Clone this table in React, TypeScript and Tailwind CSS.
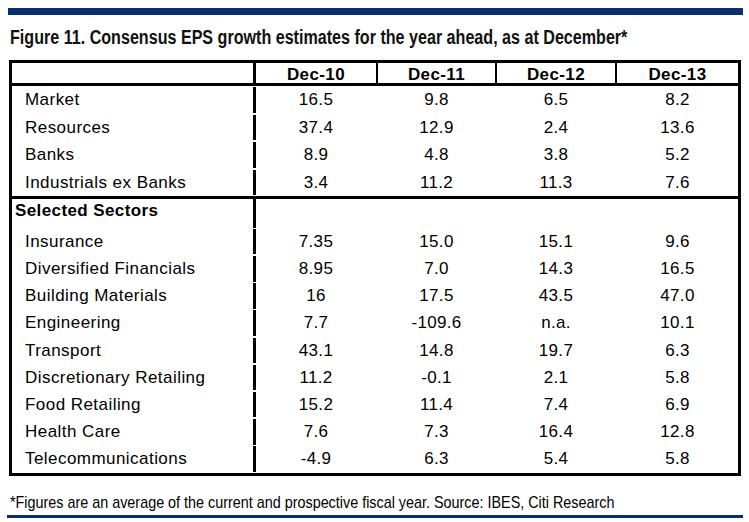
import type { ReactNode } from 'react';

// ─── Data ─────────────────────────────────────────────────────────────────────
type Row = [string, string, string, string, string];

const HEADERS = ['Dec-10', 'Dec-11', 'Dec-12', 'Dec-13'];

const MARKET_ROWS: Row[] = [
  ['Market', '16.5', '9.8', '6.5', '8.2'],
  ['Resources', '37.4', '12.9', '2.4', '13.6'],
  ['Banks', '8.9', '4.8', '3.8', '5.2'],
  ['Industrials ex Banks', '3.4', '11.2', '11.3', '7.6'],
];

const SECTOR_ROWS: Row[] = [
  ['Insurance', '7.35', '15.0', '15.1', '9.6'],
  ['Diversified Financials', '8.95', '7.0', '14.3', '16.5'],
  ['Building Materials', '16', '17.5', '43.5', '47.0'],
  ['Engineering', '7.7', '-109.6', 'n.a.', '10.1'],
  ['Transport', '43.1', '14.8', '19.7', '6.3'],
  ['Discretionary Retailing', '11.2', '-0.1', '2.1', '5.8'],
  ['Food Retailing', '15.2', '11.4', '7.4', '6.9'],
  ['Health Care', '7.6', '7.3', '16.4', '12.8'],
  ['Telecommunications', '-4.9', '6.3', '5.4', '5.8'],
];

// widths keep the header dividers and body numbers on the same centres
const COL_W = ['w-[122px]', 'w-[119px]', 'w-[120px]', 'flex-1'];

function Cells({ values, header = false }: { values: string[]; header?: boolean }) {
  return (
    <>
      {values.map((v, i) => (
        <div
          key={i}
          className={`${COL_W[i]} text-center ${
            i < 3 ? `border-r-2 ${header ? 'border-black' : 'border-transparent'}` : ''
          } ${header ? 'font-bold tracking-[0.4px]' : 'tracking-[0.3px]'}`}
        >
          {v}
        </div>
      ))}
    </>
  );
}

function Label({ children, bold = false }: { children: ReactNode; bold?: boolean }) {
  return (
    <div
      className={`w-[244px] shrink-0 border-r-[3px] border-black whitespace-nowrap ${
        bold ? 'pl-[3px] font-bold tracking-[0.4px]' : 'pl-[13px] tracking-[0.45px]'
      }`}
    >
      {children}
    </div>
  );
}

function DataRow({ row, h }: { row: Row; h: string }) {
  const [label, ...values] = row;
  return (
    <div className={`flex ${h} items-center`}>
      <div className="flex self-stretch items-center">
        <Label>{label}</Label>
      </div>
      <Cells values={values} />
    </div>
  );
}

const NARROW = { fontFamily: '"Liberation Sans Narrow", "Arial Narrow", "Liberation Sans", sans-serif' };

export default function App() {
  return (
    <div
      className="w-[749px] h-[522px] bg-white text-black flex flex-col pt-[8px]"
      style={{ fontFamily: '"Liberation Sans", Arial, sans-serif' }}
    >
      {/* top rule */}
      <div className="ml-[8px] w-[735px] h-[7px] bg-[#0b2f6e]" />

      <h1 className="ml-[10px] mt-[10px] h-[24px] leading-[24px] text-[20px] font-bold text-[#111] whitespace-nowrap" style={NARROW}>
        <span className="inline-block origin-left scale-x-[0.805]">
          Figure 11. Consensus EPS growth estimates for the year ahead, as at December*
        </span>
      </h1>

      {/* table */}
      <div className="ml-[9px] mt-[11px] w-[732px] border-[3px] border-black text-[17px]">
        <div className="flex h-[23px] leading-[23px] border-b-[3px] border-black">
          <div className="w-[244px] shrink-0 border-r-[3px] border-black" />
          <Cells values={HEADERS} header />
        </div>

        {MARKET_ROWS.map((r) => (
          <DataRow key={r[0]} row={r} h="h-[27.5px]" />
        ))}

        <div className="border-t-[3px] border-black">
          <div className="flex h-[29px]">
            <Label bold>
              <span className="block leading-[23px]">Selected Sectors</span>
            </Label>
          </div>
          {SECTOR_ROWS.map((r) => (
            <DataRow key={r[0]} row={r} h="h-[27.2px]" />
          ))}
        </div>
      </div>

      <p className="ml-[10px] mt-[17px] h-[20px] leading-[20px] text-[17px] whitespace-nowrap" style={NARROW}>
        <span className="inline-block origin-left scale-x-[0.845]">
          *Figures are an average of the current and prospective fiscal year. Source: IBES, Citi Research
        </span>
      </p>

      {/* bottom rule */}
      <div className="ml-[7px] mt-[2px] w-[736px] h-[3px] bg-[#0b2f6e]" />
    </div>
  );
}
